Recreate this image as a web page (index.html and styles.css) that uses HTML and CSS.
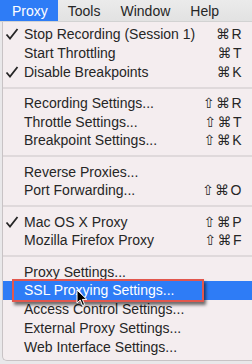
FILE: index.html
```html
<!DOCTYPE html>
<html lang="en">
<head>
    <meta charset="UTF-8">
    <meta name="viewport" content="width=device-width, initial-scale=1.0">
    <title>Proxy Menu</title>
    <link rel="stylesheet" href="styles.css">
</head>
<body>

<div class="menubar">
    <span class="menu-title active">Proxy</span>
    <span class="menu-title">Tools</span>
    <span class="menu-title">Window</span>
    <span class="menu-title">Help</span>
</div>

<div class="dropdown">
    <ul class="menu-list">
        <li class="menu-item"><span class="check"><svg width="14" height="12" viewBox="0 0 14 12"><polyline points="1.5,6.5 5,10.5 12.5,1" /></svg></span><span class="label">Stop Recording (Session 1)</span><span class="shortcut">⌘R</span></li>
        <li class="menu-item"><span class="check"></span><span class="label">Start Throttling</span><span class="shortcut">⌘T</span></li>
        <li class="menu-item"><span class="check"><svg width="14" height="12" viewBox="0 0 14 12"><polyline points="1.5,6.5 5,10.5 12.5,1" /></svg></span><span class="label">Disable Breakpoints</span><span class="shortcut">⌘K</span></li>
        <li class="separator"></li>
        <li class="menu-item"><span class="check"></span><span class="label">Recording Settings...</span><span class="shortcut">⇧⌘R</span></li>
        <li class="menu-item"><span class="check"></span><span class="label">Throttle Settings...</span><span class="shortcut">⇧⌘T</span></li>
        <li class="menu-item"><span class="check"></span><span class="label">Breakpoint Settings...</span><span class="shortcut">⇧⌘K</span></li>
        <li class="separator"></li>
        <li class="menu-item"><span class="check"></span><span class="label">Reverse Proxies...</span></li>
        <li class="menu-item"><span class="check"></span><span class="label">Port Forwarding...</span><span class="shortcut">⇧⌘O</span></li>
        <li class="separator"></li>
        <li class="menu-item"><span class="check"><svg width="14" height="12" viewBox="0 0 14 12"><polyline points="1.5,6.5 5,10.5 12.5,1" /></svg></span><span class="label">Mac OS X Proxy</span><span class="shortcut">⇧⌘P</span></li>
        <li class="menu-item"><span class="check"></span><span class="label">Mozilla Firefox Proxy</span><span class="shortcut">⇧⌘F</span></li>
        <li class="separator"></li>
        <li class="menu-item"><span class="check"></span><span class="label">Proxy Settings...</span></li>
        <li class="menu-item selected"><span class="check"></span><span class="label">SSL Proxying Settings...</span></li>
        <li class="menu-item"><span class="check"></span><span class="label">Access Control Settings...</span></li>
        <li class="menu-item"><span class="check"></span><span class="label">External Proxy Settings...</span></li>
        <li class="menu-item"><span class="check"></span><span class="label">Web Interface Settings...</span></li>
    </ul>

    <!-- callout drawn over the highlighted row -->
    <div class="callout">SSL Proxying Settings...</div>
    <svg class="cursor" width="12" height="18" viewBox="0 0 12 18">
        <path d="M1 1 L1 14 L4.2 11 L6.5 16.5 L8.6 15.6 L6.4 10.4 L10.8 10.4 Z" fill="#000" stroke="#fff" stroke-width="1" />
    </svg>
</div>

</body>
</html>
```

FILE: styles.css
```css
body {
    margin: 0;
    padding: 0;
    width: 252px;
    height: 364px;
    overflow: hidden;
    background-color: #e9e8ea;
    font-family: "Liberation Sans", Arial, "DejaVu Sans", sans-serif;
    font-size: 14px;
    color: #262626;
}

.menubar {
    display: flex;
    height: 22px;
    background: linear-gradient(#ebebeb, #e2e2e2);
    border-bottom: 1px solid #d2d2d2;
    box-sizing: border-box;
}

.menu-title {
    display: flex;
    align-items: center;
    padding: 0 10px;
    line-height: 22px;
}

.menu-title.active {
    padding-left: 12px;
    background-color: #2e7cf6;
    color: #fff;
}

.dropdown {
    position: relative;
    margin-left: 2px;
    width: 260px;
    height: 339px;
    background-color: #f4edef;
    border-left: 1px solid #c8c3c5;
    border-bottom: 1px solid #c8c3c5;
    border-radius: 0 0 0 5px;
    box-sizing: border-box;
}

.menu-list {
    list-style: none;
    margin: 0;
    padding: 3px 0 0 0;
}

.menu-item {
    display: flex;
    align-items: center;
    height: 18.75px;
    line-height: 18.75px;
    padding-right: 19px;
}

.check {
    width: 21px;
    height: 12px;
    flex-shrink: 0;
}

.check svg {
    display: block;
    margin-left: 2px;
    fill: none;
    stroke: #262626;
    stroke-width: 1.8;
}

.shortcut {
    margin-left: auto;
    font-family: "Liberation Sans", "DejaVu Sans", sans-serif;
    font-size: 14px;
    letter-spacing: 1.5px;
}

.menu-item.selected {
    background-color: #2e7cf6;
    color: #fff;
}

.separator {
    height: 12.5px;
    display: flex;
    align-items: center;
}

.separator::after {
    content: "";
    flex: 1;
    height: 2px;
    background-color: #dfd9db;
}

.callout {
    position: absolute;
    left: 9px;
    top: 257px;
    width: 192px;
    height: 23px;
    box-sizing: border-box;
    padding-left: 10px;
    line-height: 19px;
    background-color: #2e7cf6;
    color: #fff;
    border: 2px solid #e2574d;
    box-shadow: 2px 3px 3px rgba(0, 0, 0, 0.55);
}

.cursor {
    position: absolute;
    left: 73px;
    top: 267px;
}
```
